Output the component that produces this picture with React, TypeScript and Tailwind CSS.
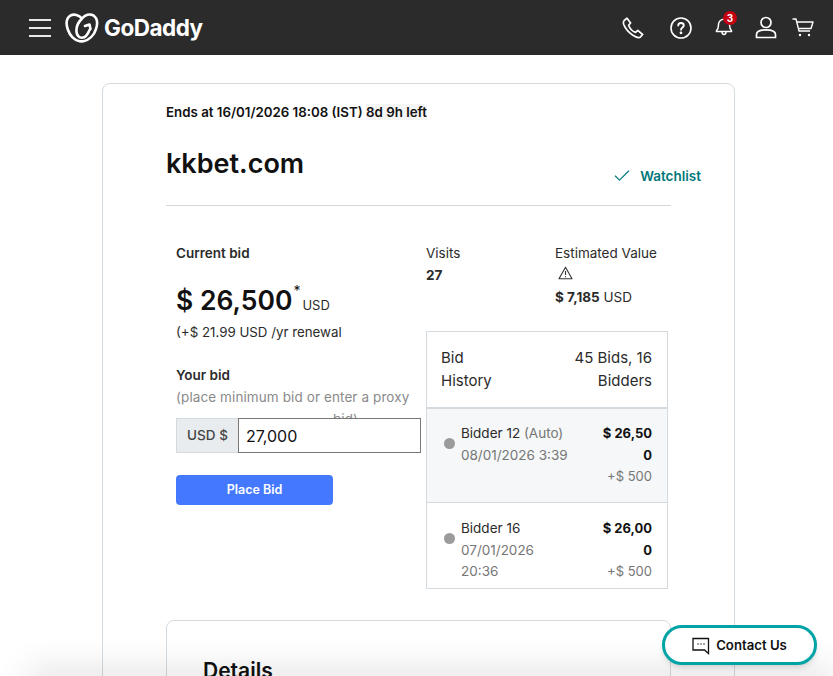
import { Check } from "lucide-react";

const font = "font-['Inter','Liberation_Sans',sans-serif]";

function Logo() {
  return (
    <svg width="34" height="30" viewBox="0 0 34 30" fill="none" stroke="white" strokeWidth="2.6" strokeLinecap="round" strokeLinejoin="round">
      <path d="M17 5.5C14 2 9 0.5 5.5 2.5 1.5 5 0.8 10.5 2.8 16.5 4.8 22.5 9.5 27.5 14.5 28.2 15.8 28.4 17 28.4 18.5 28.2 24 27.2 29 22.5 31 16 33 10 32 5 28.5 2.5 25 0.5 20 1.5 17 5.5 13.5 9 11 14 11.5 19 11.8 22 14 25 17 24.8 20.5 24.5 23 21 24.5 17" />
      <path d="M20 13L24.5 11.5 25.5 16" />
    </svg>
  );
}

function Header() {
  return (
    <header className="h-[55px] bg-[#2b2b2b] flex items-center pl-[29px] pr-[19px] shrink-0">
      <div className="w-[22px] flex flex-col gap-[6px]">
        <span className="block h-[2px] bg-[#e8e8e8]" />
        <span className="block h-[2px] bg-[#e8e8e8]" />
        <span className="block h-[2px] bg-[#e8e8e8]" />
      </div>
      <div className="ml-[14px] flex items-center gap-[5px]">
        <Logo />
        <span className="text-white text-[22.5px] font-bold tracking-[-0.5px] font-['Inter',sans-serif]">GoDaddy</span>
      </div>
      <div className="ml-auto flex items-center">
        {/* phone */}
        <svg width="22" height="22" viewBox="0 0 22 22" fill="none" stroke="white" strokeWidth="1.7" strokeLinejoin="round">
          <path d="M2.2 3.5L5 1.2 8.6 6 6.6 8.2C7.6 11 10.6 14.4 13.6 15.4L15.8 13.4 20.6 17.5 18.6 19.8C17 21.2 14 20.4 10.5 18 6.5 15.2 3.2 11 1.8 7.6 1.2 6 1.2 4.6 2.2 3.5Z" />
        </svg>
        {/* help */}
        <svg className="ml-[26px]" width="22" height="22" viewBox="0 0 22 22" fill="none" stroke="white" strokeWidth="1.6" strokeLinecap="round">
          <circle cx="11" cy="11" r="10" />
          <path d="M8.2 8.6C8.2 6.8 9.5 6 11 6 12.6 6 13.8 7 13.8 8.4 13.8 10.4 11 10.6 11 12.8" strokeWidth="1.8" />
          <circle cx="11" cy="15.8" r="0.6" fill="white" />
        </svg>
        {/* bell */}
        <div className="relative ml-[23px] w-[18px] h-[22px]">
          <svg width="18" height="22" viewBox="0 0 18 22" fill="none" stroke="white" strokeWidth="1.5" strokeLinejoin="round" className="absolute left-0 top-[-2px]">
            <path d="M1.5 15.5C3 14.4 3.4 13 3.4 10.5 3.4 6.8 5.6 4.2 9 4.2 12.4 4.2 14.6 6.8 14.6 10.5 14.6 13 15 14.4 16.5 15.5V16.5H1.5Z" />
            <path d="M7 17C7 18.6 7.8 19.4 9 19.4 10.2 19.4 11 18.6 11 17" />
          </svg>
          <span className={`absolute left-[8px] top-[-6px] w-[14px] h-[14px] rounded-full bg-[#c4000f] text-white text-[10px] font-bold leading-[14px] text-center ${font}`}>3</span>
        </div>
        {/* user */}
        <svg className="ml-[22px]" width="22" height="23" viewBox="0 0 22 23" fill="none" stroke="white" strokeWidth="1.7" strokeLinejoin="round">
          <circle cx="11" cy="6.5" r="5" />
          <path d="M1.5 21.5V18.5C1.5 15.5 5.5 13.8 11 13.8 16.5 13.8 20.5 15.5 20.5 18.5V21.5Z" />
        </svg>
        {/* cart */}
        <svg className="ml-[15px]" width="22" height="20" viewBox="0 0 22 20" fill="none" stroke="white" strokeWidth="1.4" strokeLinejoin="round">
          <path d="M0.5 1H4L7 13H18" />
          <path d="M5 4H21L19 10.5H6.5" />
          <circle cx="8" cy="17" r="1.2" fill="white" stroke="none" />
          <circle cx="17" cy="17" r="1.2" fill="white" stroke="none" />
        </svg>
      </div>
    </header>
  );
}

function BidRow({ name, auto, when, amount, inc, shaded }: { name: string; auto?: boolean; when: string; amount: string; inc: string; shaded?: boolean }) {
  return (
    <div className={`flex pl-[17px] pr-[15px] ${shaded ? "bg-[#f5f7f8] h-[93px] pt-[14px]" : "h-[86px] pt-[15px] border-t border-[#d4dbe0]"}`}>
      <span className="mt-[15px] w-[11px] h-[11px] rounded-full bg-[#9b9b9b] shrink-0" />
      <div className="ml-[6px] flex-1 text-[13.5px] leading-[21.5px]">
        <div className="text-[#2b2b2b]">
          {name} {auto && <span className="text-[#767676]">(Auto)</span>}
        </div>
        <div className="text-[#767676] w-[110px]">{when}</div>
      </div>
      <div className="w-[52px] text-right text-[13px] leading-[21.5px]">
        <div className="font-bold text-[#111] break-all">{amount}</div>
        <div className="text-[#767676] whitespace-nowrap">{inc}</div>
      </div>
    </div>
  );
}

export default function App() {
  return (
    <div className={`relative h-[676px] w-[833px] overflow-hidden bg-white text-[#111] ${font}`}>
      <Header />
      <main className="pl-[102px] pr-[98px] pt-[28px]">
        <section className="border border-[#d4dbe0] rounded-[8px] h-[700px] pl-[63px] pr-[63px]">
          <p className="mt-[19px] text-[13.3px] leading-[18px] font-semibold">
            Ends at 16/01/2026 18:08 (IST) <span className="bg-[#f5f5f5]">8d 9h left</span>
          </p>
          <div className="flex items-end justify-between border-b border-[#d6d6d6] h-[85px] pb-[22px]">
            <h1 className="text-[27px] leading-[36px] font-semibold mb-[1px]">kkbet.com</h1>
            <button className="flex items-center gap-[8px] mr-[-30px] mb-[-3px] text-[13.5px] font-semibold text-[#00777a]">
              <Check size={20} strokeWidth={1.4} />
              Watchlist
            </button>
          </div>

          <div className="flex">
            <div className="w-[260px] pl-[10px] shrink-0">
              <p className="mt-[38px] text-[13.5px] leading-[18px] font-semibold text-[#2b2b2b]">Current bid</p>
              <div className="mt-[20px] flex items-start">
                <span className="text-[26.5px] leading-[36px] font-semibold">$ 26,500</span>
                <span className="text-[14px] leading-[18px] ml-[1px]">*</span>
                <span className="text-[13px] ml-[2px] mt-[14px] leading-[18px] text-[#2b2b2b]">USD</span>
              </div>
              <p className="mt-[5px] text-[13.3px] leading-[18px] text-[#2b2b2b]">(+$ 21.99 USD /yr renewal</p>
              <p className="mt-[25px] text-[13.5px] leading-[18px] font-semibold text-[#2b2b2b]">Your bid</p>
              <div className="mt-[2px] h-[32px] overflow-hidden text-[13.5px] tracking-[0.1px] leading-[22px] text-[#8a8a8a] whitespace-nowrap">
                (place minimum bid or enter a proxy
                <span className="block pl-[157px]">bid)</span>
              </div>
              <div className="flex h-[35px] w-[245px]">
                <span className="w-[62px] bg-[#e8ecef] border border-[#d4dbe0] border-r-0 flex items-center justify-center text-[13.5px] font-medium text-[#444]">USD $</span>
                <input
                  readOnly
                  value="27,000"
                  className="w-[183px] border border-[#767676] px-[7px] text-[16px] text-[#111] outline-none"
                />
              </div>
              <button className="mt-[22px] w-[157px] h-[30px] pt-[1px] rounded-[4px] bg-[#4479ff] text-white text-[12.5px] font-semibold">Place Bid</button>
            </div>

            <div className="w-[242px] shrink-0">
              <div className="flex mt-[36px] h-[83px]">
                <div className="w-[129px] text-[13.5px] leading-[22px] text-[#2b2b2b]">
                  <div>Visits</div>
                  <div className="font-bold">27</div>
                </div>
                <div className="text-[13.5px] leading-[22px] text-[#2b2b2b]">
                  <div className="whitespace-nowrap">Estimated Value</div>
                  <svg className="ml-[3px] mt-[2px]" width="15" height="14" viewBox="0 0 15 14" fill="none" stroke="#333" strokeWidth="1.1" strokeLinejoin="round">
                    <path d="M7.5 1.2L14 12.8H1Z" />
                    <path d="M7.5 5V9M7.5 10.2V11.2" />
                  </svg>
                  <div className="mt-[6px] whitespace-nowrap"><b>$ 7,185</b> USD</div>
                </div>
              </div>
              <div className="mt-[6px] border border-[#d4dbe0]">
                <div className="flex justify-between pl-[14px] pr-[15px] pt-[14px] h-[77px] text-[15px] leading-[23px] text-[#2b2b2b] border-b-2 border-[#d4dbe0]">
                  <div>Bid<br />History</div>
                  <div className="text-right">45 Bids, 16<br />Bidders</div>
                </div>
                <BidRow shaded name="Bidder 12" auto when="08/01/2026 3:39" amount="$ 26,500" inc="+$ 500" />
                <BidRow name="Bidder 16" when="07/01/2026 20:36" amount="$ 26,000" inc="+$ 500" />
              </div>
            </div>
          </div>

          <div className="mt-[31px] border border-[#d4dbe0] rounded-[8px] h-[300px] w-[505px] pl-[36px] pt-[36px]">
            <h2 className="text-[21px] leading-[28px] font-semibold">Details</h2>
          </div>
        </section>
      </main>

      {/* shadow of something just below the fold */}
      <div className="absolute left-[30px] right-0 top-[676px] h-[10px] shadow-[0_0_35px_rgba(0,0,0,0.3)] pointer-events-none" />

      <button className="absolute left-[662px] top-[625px] w-[155px] h-[40px] pt-[1px] rounded-full border-[3px] border-[#00a4a6] bg-white flex items-center justify-center gap-[6px] text-[13.2px] font-semibold text-[#111] shadow-md">
        <svg width="18" height="18" viewBox="0 0 18 18" fill="none" stroke="#111" strokeWidth="1.3">
          <path d="M1 1.5H16.5V16.5L12.5 13H1Z" />
          <path d="M5.5 7H6.5M8.5 7H9.5M11.5 7H12.5" />
        </svg>
        Contact Us
      </button>
    </div>
  );
}
